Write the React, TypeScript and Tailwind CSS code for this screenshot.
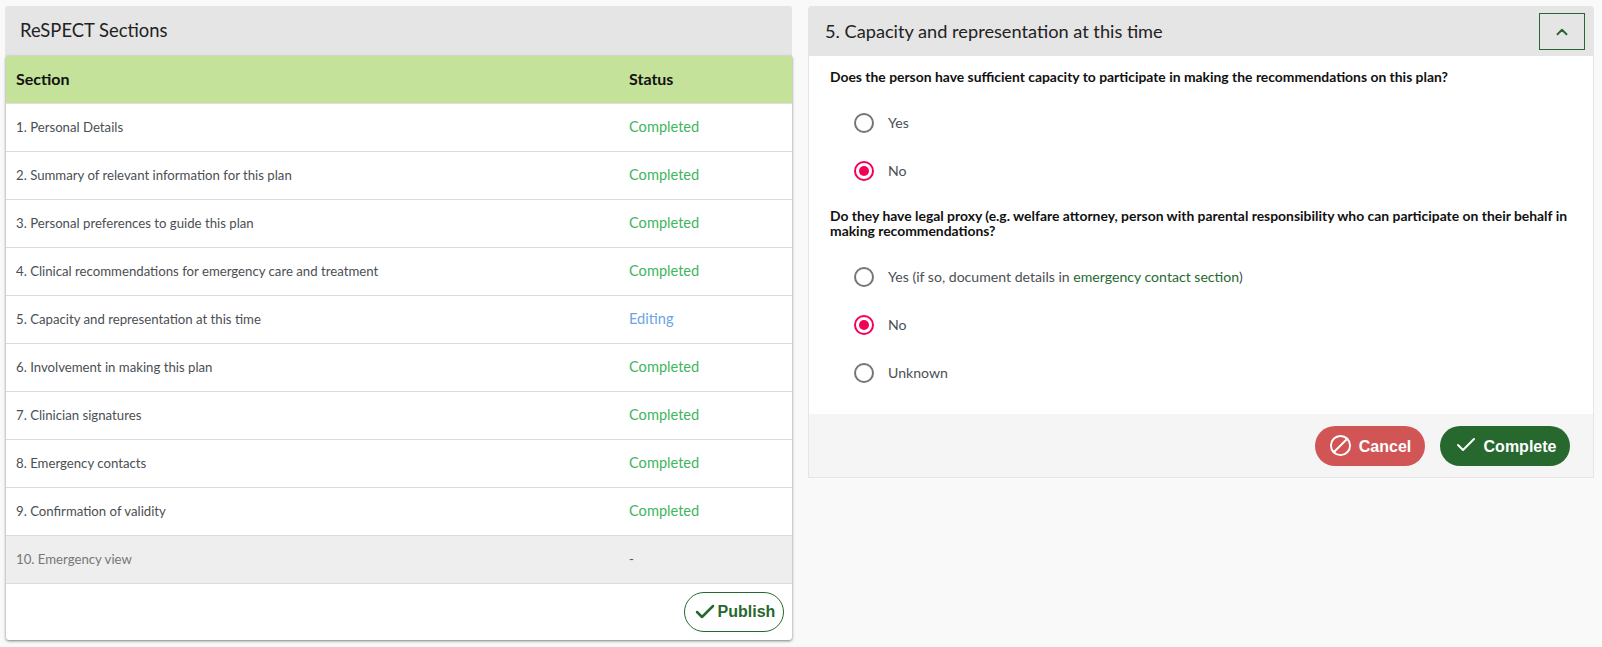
import { Check, ChevronUp, Ban } from "lucide-react";

const sections = [
  { name: "1. Personal Details", status: "Completed" },
  { name: "2. Summary of relevant information for this plan", status: "Completed" },
  { name: "3. Personal preferences to guide this plan", status: "Completed" },
  { name: "4. Clinical recommendations for emergency care and treatment", status: "Completed" },
  { name: "5. Capacity and representation at this time", status: "Editing" },
  { name: "6. Involvement in making this plan", status: "Completed" },
  { name: "7. Clinician signatures", status: "Completed" },
  { name: "8. Emergency contacts", status: "Completed" },
  { name: "9. Confirmation of validity", status: "Completed" },
];

function Radio({ checked, children }: { checked?: boolean; children: React.ReactNode }) {
  return (
    <label className="flex h-12 items-center gap-[14px] pl-[24px] text-[14.1px] text-[#4b4f54]">
      <span
        className={`flex h-5 w-5 items-center justify-center rounded-full border-2 ${
          checked ? "border-[#f50057]" : "border-[#757575]"
        }`}
      >
        {checked ? <span className="h-[10px] w-[10px] rounded-full bg-[#f50057]" /> : null}
      </span>
      <span>{children}</span>
    </label>
  );
}

export default function App() {
  return (
    <div className="flex min-h-[647px] items-start gap-4 bg-[#f9f9f9] pl-[5px] pr-2 pt-[6px] font-['Lato','Noto_Sans',sans-serif]">
      <section className="w-[787px]">
        <h2 className="flex h-[50px] items-center rounded-t-[3px] bg-[#e5e5e5] pl-[15px] text-[18.4px] text-[#222]">
          ReSPECT Sections
        </h2>
        <div className="ml-px rounded-b-[3px] bg-white shadow-[0_1px_3px_rgba(0,0,0,0.5)]">
          <div className="flex h-12 items-center border-b border-[#e0e0e0] bg-[#c5e29b] pb-[2px] pl-[10px] text-[16px] font-bold text-[#111]">
            <span className="w-[613px]">Section</span>
            <span>Status</span>
          </div>
          {sections.map((row) => (
            <div key={row.name} className="flex h-12 items-center border-b border-[#dcdcdc] pl-[10px] text-[13.2px] text-[#4b4f54]">
              <span className="w-[613px]">{row.name}</span>
              <span className={`pb-[2px] text-[14.6px] ${row.status === "Editing" ? "text-[#6aa5e3]" : "text-[#3fb55f]"}`}>
                {row.status}
              </span>
            </div>
          ))}
          <div className="flex h-12 items-center border-b border-[#dcdcdc] bg-[#eeeeee] pl-[10px] text-[13.2px] text-[#777]">
            <span className="w-[613px]">10. Emergency view</span>
            <span className="text-[#555]">-</span>
          </div>
          <div className="flex h-[56px] items-center justify-end pr-2">
            <button className="flex h-10 w-[100px] items-center justify-center gap-px rounded-full border border-[#27682f] font-['Liberation_Sans',sans-serif] text-base font-bold text-[#27682f]">
              <Check size={24} strokeWidth={2.5} />
              Publish
            </button>
          </div>
        </div>
      </section>

      <section className="w-[786px] rounded-t-[3px] border border-[#e5e5e5] bg-white">
        <div className="flex h-[49px] items-center justify-between bg-[#e5e5e5] pl-4 pr-2 text-[18.2px] text-[#222]">
          <h2>5. Capacity and representation at this time</h2>
          <button className="flex h-[37px] w-[46px] items-center justify-center border border-[#27682f] text-[#27682f]">
            <ChevronUp size={18} strokeWidth={2.5} />
          </button>
        </div>
        <div className="pl-[21px] pr-[14px] pt-3">
          <p className="text-[13.9px] font-bold leading-[18px] text-[#111]">
            Does the person have sufficient capacity to participate in making the recommendations on this plan?
          </p>
          <div className="mt-[13px]">
            <Radio>Yes</Radio>
            <Radio checked>No</Radio>
          </div>
          <p className="mt-[13px] text-[13.9px] font-bold leading-[15px] text-[#111]">
            Do they have legal proxy (e.g. welfare attorney, person with parental responsibility who can participate on their behalf in making recommendations?
          </p>
          <div className="mt-[15px] pb-[17px]">
            <Radio>
              Yes (if so, document details in <span className="text-[#27682f]">emergency contact section</span>)
            </Radio>
            <Radio checked>No</Radio>
            <Radio>Unknown</Radio>
          </div>
        </div>
        <div className="flex h-[63px] items-center justify-end gap-[15px] bg-[#f5f5f5] pr-[23px] font-['Liberation_Sans',sans-serif] text-base font-bold text-white">
          <button className="flex h-10 w-[110px] items-center justify-center gap-[7px] rounded-full bg-[#d25555]">
            <Ban size={23} strokeWidth={2} className="-scale-x-100" />
            <span className="pt-[2px]">Cancel</span>
          </button>
          <button className="flex h-10 w-[130px] items-center justify-center gap-[6px] rounded-full bg-[#27682f]">
            <Check size={24} strokeWidth={2} className="-translate-y-px" />
            <span className="pt-[2px]">Complete</span>
          </button>
        </div>
      </section>
    </div>
  );
}
